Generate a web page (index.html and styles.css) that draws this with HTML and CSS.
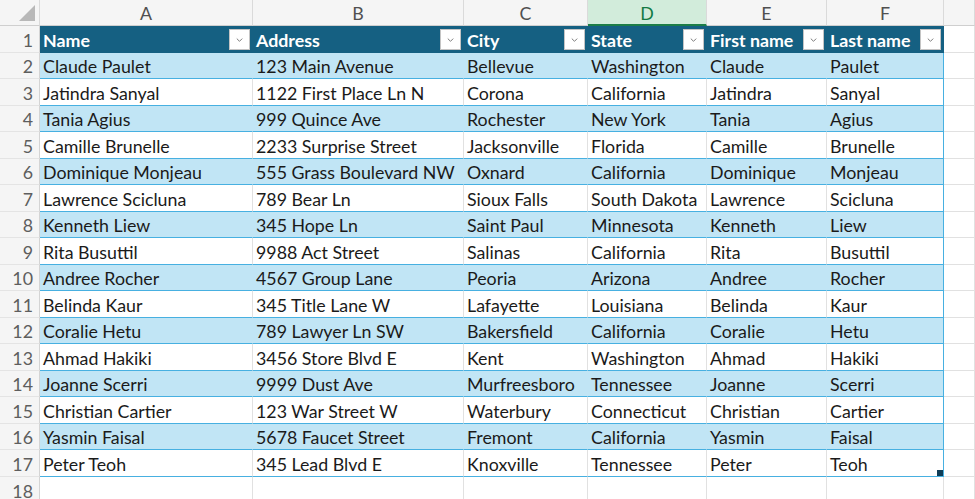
FILE: index.html
```html
<!DOCTYPE html>
<html>
<head>
<meta charset="utf-8">
<link rel="stylesheet" href="styles.css">
</head>
<body>
<div class="sheet">
  <div class="row colhead">
    <div class="corner"><span class="tri"></span></div>
    <div class="ch">A</div><div class="ch">B</div><div class="ch">C</div><div class="ch sel">D</div><div class="ch">E</div><div class="ch">F</div><div class="ch"></div>
  </div>

  <div class="row thead">
    <div class="rh">1</div>
    <div class="c"><span>Name</span><span class="fb"><svg viewBox="0 0 21 21"><path d="M7.5 9.5l3 3 3-3"/></svg></span></div>
    <div class="c"><span>Address</span><span class="fb"><svg viewBox="0 0 21 21"><path d="M7.5 9.5l3 3 3-3"/></svg></span></div>
    <div class="c"><span>City</span><span class="fb"><svg viewBox="0 0 21 21"><path d="M7.5 9.5l3 3 3-3"/></svg></span></div>
    <div class="c"><span>State</span><span class="fb"><svg viewBox="0 0 21 21"><path d="M7.5 9.5l3 3 3-3"/></svg></span></div>
    <div class="c"><span>First name</span><span class="fb"><svg viewBox="0 0 21 21"><path d="M7.5 9.5l3 3 3-3"/></svg></span></div>
    <div class="c last"><span>Last name</span><span class="fb"><svg viewBox="0 0 21 21"><path d="M7.5 9.5l3 3 3-3"/></svg></span></div>
    <div class="g"></div>
  </div>

  <div class="row band"><div class="rh">2</div><div class="c">Claude Paulet</div><div class="c">123 Main Avenue</div><div class="c">Bellevue</div><div class="c">Washington</div><div class="c">Claude</div><div class="c last">Paulet</div><div class="g"></div></div>
  <div class="row"><div class="rh">3</div><div class="c">Jatindra Sanyal</div><div class="c">1122 First Place Ln N</div><div class="c">Corona</div><div class="c">California</div><div class="c">Jatindra</div><div class="c last">Sanyal</div><div class="g"></div></div>
  <div class="row band"><div class="rh">4</div><div class="c">Tania Agius</div><div class="c">999 Quince Ave</div><div class="c">Rochester</div><div class="c">New York</div><div class="c">Tania</div><div class="c last">Agius</div><div class="g"></div></div>
  <div class="row"><div class="rh">5</div><div class="c">Camille Brunelle</div><div class="c">2233 Surprise Street</div><div class="c">Jacksonville</div><div class="c">Florida</div><div class="c">Camille</div><div class="c last">Brunelle</div><div class="g"></div></div>
  <div class="row band"><div class="rh">6</div><div class="c">Dominique Monjeau</div><div class="c">555 Grass Boulevard NW</div><div class="c">Oxnard</div><div class="c">California</div><div class="c">Dominique</div><div class="c last">Monjeau</div><div class="g"></div></div>
  <div class="row"><div class="rh">7</div><div class="c">Lawrence Scicluna</div><div class="c">789 Bear Ln</div><div class="c">Sioux Falls</div><div class="c">South Dakota</div><div class="c">Lawrence</div><div class="c last">Scicluna</div><div class="g"></div></div>
  <div class="row band"><div class="rh">8</div><div class="c">Kenneth Liew</div><div class="c">345 Hope Ln</div><div class="c">Saint Paul</div><div class="c">Minnesota</div><div class="c">Kenneth</div><div class="c last">Liew</div><div class="g"></div></div>
  <div class="row"><div class="rh">9</div><div class="c">Rita Busuttil</div><div class="c">9988 Act Street</div><div class="c">Salinas</div><div class="c">California</div><div class="c">Rita</div><div class="c last">Busuttil</div><div class="g"></div></div>
  <div class="row band"><div class="rh">10</div><div class="c">Andree Rocher</div><div class="c">4567 Group Lane</div><div class="c">Peoria</div><div class="c">Arizona</div><div class="c">Andree</div><div class="c last">Rocher</div><div class="g"></div></div>
  <div class="row"><div class="rh">11</div><div class="c">Belinda Kaur</div><div class="c">345 Title Lane W</div><div class="c">Lafayette</div><div class="c">Louisiana</div><div class="c">Belinda</div><div class="c last">Kaur</div><div class="g"></div></div>
  <div class="row band"><div class="rh">12</div><div class="c">Coralie Hetu</div><div class="c">789 Lawyer Ln SW</div><div class="c">Bakersfield</div><div class="c">California</div><div class="c">Coralie</div><div class="c last">Hetu</div><div class="g"></div></div>
  <div class="row"><div class="rh">13</div><div class="c">Ahmad Hakiki</div><div class="c">3456 Store Blvd E</div><div class="c">Kent</div><div class="c">Washington</div><div class="c">Ahmad</div><div class="c last">Hakiki</div><div class="g"></div></div>
  <div class="row band"><div class="rh">14</div><div class="c">Joanne Scerri</div><div class="c">9999 Dust Ave</div><div class="c">Murfreesboro</div><div class="c">Tennessee</div><div class="c">Joanne</div><div class="c last">Scerri</div><div class="g"></div></div>
  <div class="row"><div class="rh">15</div><div class="c">Christian Cartier</div><div class="c">123 War Street W</div><div class="c">Waterbury</div><div class="c">Connecticut</div><div class="c">Christian</div><div class="c last">Cartier</div><div class="g"></div></div>
  <div class="row band"><div class="rh">16</div><div class="c">Yasmin Faisal</div><div class="c">5678 Faucet Street</div><div class="c">Fremont</div><div class="c">California</div><div class="c">Yasmin</div><div class="c last">Faisal</div><div class="g"></div></div>
  <div class="row endrow"><div class="rh">17</div><div class="c">Peter Teoh</div><div class="c">345 Lead Blvd E</div><div class="c">Knoxville</div><div class="c">Tennessee</div><div class="c">Peter</div><div class="c last">Teoh<span class="handle"></span></div><div class="g"></div></div>
  <div class="row empty"><div class="rh">18</div><div class="e"></div><div class="e"></div><div class="e"></div><div class="e"></div><div class="e"></div><div class="e"></div><div class="g"></div></div>
</div>
</body>
</html>
```

FILE: styles.css
```css
html, body {
  margin: 0;
  padding: 0;
  background: #ffffff;
}

.sheet {
  width: 975px;
  height: 499px;
  overflow: hidden;
  font-family: Lato, "Noto Sans", sans-serif;
  font-size: 17.8px;
  color: #1a1a1a;
}

.row {
  display: grid;
  grid-template-columns: 40px 213px 211px 124px 119px 120px 117px 31px;
  height: 26.53px;
}

.row > div {
  box-sizing: border-box;
  border-right: 1px solid #e1e1e1;
  border-bottom: 1px solid #e1e1e1;
  white-space: nowrap;
  overflow: hidden;
}

/* column header row */
.colhead {
  height: 26px;
}
.colhead > div {
  background: #f5f5f5;
  border-right-color: #dadada;
  border-bottom-color: #cfcfcf;
  color: #505050;
  display: flex;
  align-items: center;
  justify-content: center;
  padding-top: 1px;
}
.colhead .ch.sel {
  background: #d2ecdb;
  color: #137a43;
  border-bottom: 2px solid #1c7d47;
}
.corner {
  position: relative;
}
.corner .tri {
  position: absolute;
  right: 4px;
  bottom: 4px;
  width: 0;
  height: 0;
  border-left: 16px solid transparent;
  border-bottom: 16px solid #b8b8b8;
}

/* row header */
.rh {
  background: #f5f5f5;
  border-right-color: #d4d4d4 !important;
  border-bottom-color: #e4e4e4 !important;
  color: #5e5e5e;
  display: flex;
  align-items: center;
  justify-content: flex-end;
  padding-right: 6px;
  padding-top: 2px;
}

/* table cells */
.c {
  display: flex;
  align-items: center;
  padding-left: 3px;
  padding-top: 2px;
  border-bottom-color: #47b0e1 !important;
}
.c.last {
  border-right-color: #47b0e1 !important;
  position: relative;
}
.band .c {
  background: #c1e5f5;
  border-right-color: #c1e5f5;
}
.band .c.last {
  border-right-color: #47b0e1;
}

/* table header row */
.thead .c {
  background: #156082;
  color: #ffffff;
  font-weight: 700;
  border-right-color: #156082;
  border-bottom-color: #156082 !important;
  justify-content: space-between;
  padding-right: 2px;
}
.thead .c.last {
  border-right-color: #156082 !important;
}
.fb {
  width: 21px;
  height: 21px;
  box-sizing: border-box;
  background: #ffffff;
  border: 1px solid #c4c4c4;
  flex: none;
  display: flex;
  margin-top: -1px;
}
.fb svg {
  width: 100%;
  height: 100%;
}
.fb path {
  fill: none;
  stroke: #7a7a7a;
  stroke-width: 1.1;
}

.handle {
  position: absolute;
  right: 0;
  bottom: 0;
  width: 6px;
  height: 6px;
  background: #0f3d57;
}

.e, .g {
  background: #ffffff;
}
```
